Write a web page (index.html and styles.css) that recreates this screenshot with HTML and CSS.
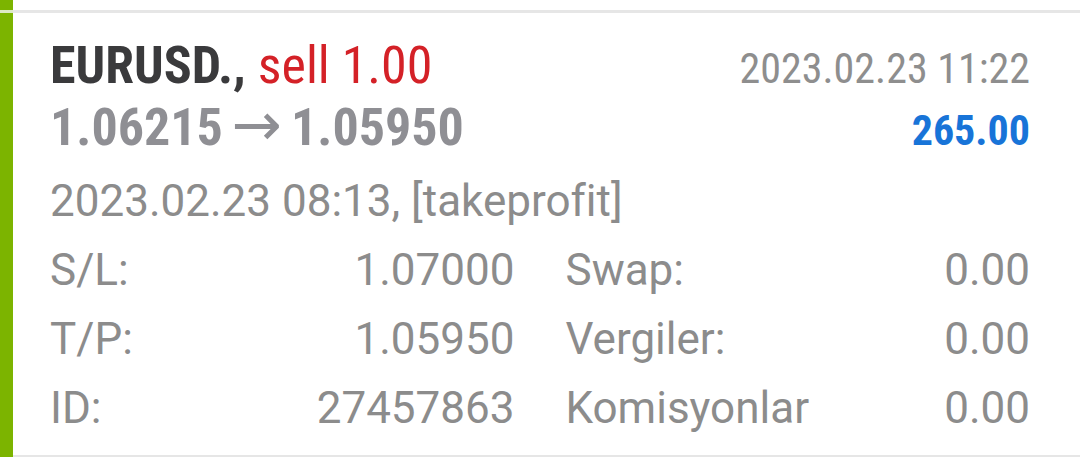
FILE: index.html
```html
<!DOCTYPE html>
<html lang="tr">
<head>
<meta charset="utf-8">
<title>Deal</title>
<link rel="stylesheet" href="styles.css">
</head>
<body>
<div class="prev"></div>
<div class="sep"><span class="sep-mark"></span></div>
<div class="card">
  <div class="card-inner">
    <div class="head">
      <div class="head-row">
        <div class="title"><span class="sym">EURUSD.,</span> <span class="sell">sell 1.00</span></div>
        <div class="time">2023.02.23 11:22</div>
      </div>
      <div class="head-row">
        <div class="prices">1.06215 <span class="arrow">→</span> 1.05950</div>
        <div class="profit">265.00</div>
      </div>
    </div>
    <div class="body">
      <div class="open">2023.02.23 08:13, [takeprofit]</div>
      <div class="grid">
        <div class="cell"><span>S/L:</span><span>1.07000</span></div>
        <div class="cell"><span>Swap:</span><span>0.00</span></div>
        <div class="cell"><span>T/P:</span><span>1.05950</span></div>
        <div class="cell"><span>Vergiler:</span><span>0.00</span></div>
        <div class="cell"><span>ID:</span><span>27457863</span></div>
        <div class="cell"><span>Komisyonlar</span><span>0.00</span></div>
      </div>
    </div>
  </div>
</div>
</body>
</html>
```
FILE: styles.css
```css
html, body {
  margin: 0;
  padding: 0;
  background: #ffffff;
}
body {
  width: 1080px;
  height: 465px;
  overflow: hidden;
  font-family: Roboto, "Liberation Sans", sans-serif;
}
.prev {
  height: 10px;
  width: 13px;
  background: #7cb400;
}
.sep {
  height: 3px;
  background: #e6e6e6;
  display: flex;
}
.sep-mark {
  width: 13px;
  background: #dde9c4;
}
.card {
  border-left: 13px solid #7cb400;
  height: 444px;
  box-sizing: border-box;
}
.card-inner {
  height: 444px;
  box-sizing: border-box;
  padding: 24px 50px 0 37px;
  border-bottom: 2px solid #e6e6e6;
}
.head-row {
  display: flex;
  justify-content: space-between;
  align-items: baseline;
  height: 58px;
  line-height: 58px;
  font-family: "Roboto Condensed", Roboto, sans-serif;
}
.title, .prices {
  font-size: 52px;
  font-weight: 700;
}
.sym { color: #3a3a3c; }
.sell { color: #d42127; font-weight: 400; }
.prices { color: #8f8f94; }
.arrow {
  font-family: "DejaVu Sans", sans-serif;
  font-weight: 400;
  font-size: 60px;
  line-height: 58px;
  margin: 0 -3px;
}
.time {
  font-size: 42px;
  color: #8e8e8e;
}
.profit {
  font-size: 42px;
  font-weight: 700;
  color: #1874d8;
}
.body {
  margin-top: 14px;
  font-size: 44px;
  line-height: 69px;
  color: #8c8c8c;
}
.grid {
  display: grid;
  grid-template-columns: 1fr 1fr;
  column-gap: 51px;
}
.cell {
  display: flex;
  justify-content: space-between;
}
```
